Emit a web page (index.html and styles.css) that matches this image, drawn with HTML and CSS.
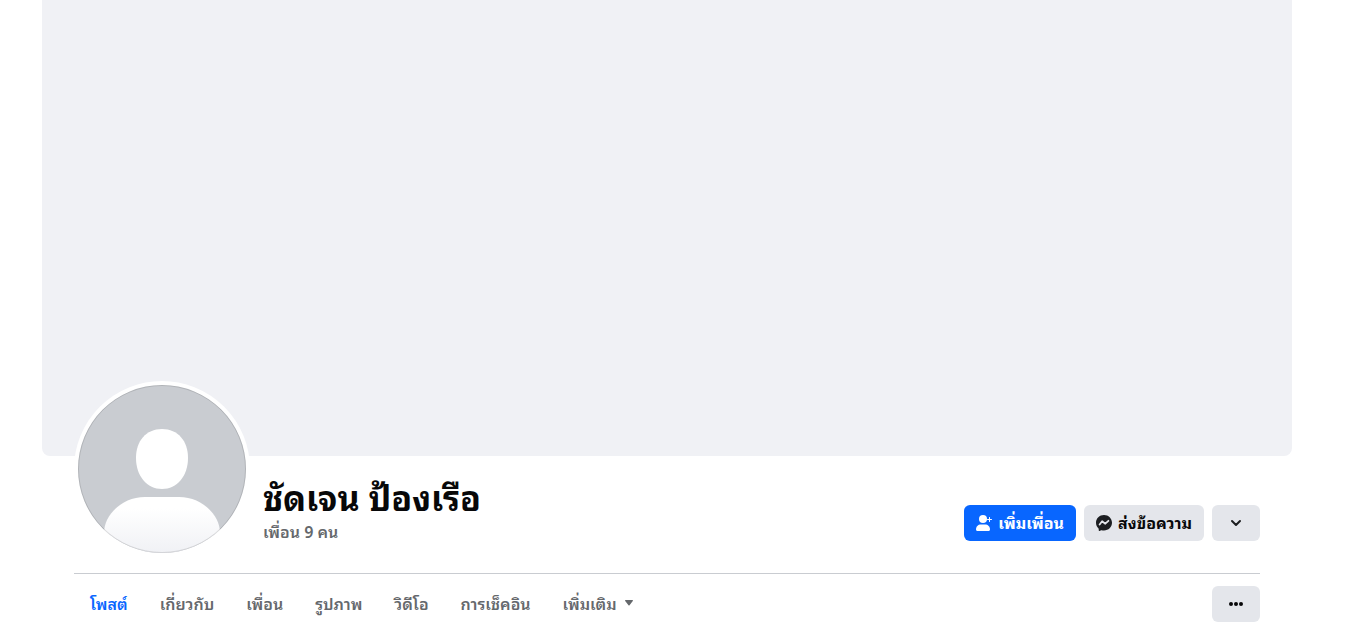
FILE: index.html
```
<!DOCTYPE html>
<html lang="th">
<head>
    <meta charset="UTF-8">
    <meta name="viewport" content="width=device-width, initial-scale=1.0">
    <title>ชัดเจน ป้องเรือ</title>
    <link rel="stylesheet" href="styles.css">
</head>
<body>

<main class="profile">
    <div class="cover"></div>

    <div class="profile-body">
        <header class="profile-header">
            <a href="#" class="avatar" aria-label="รูปโปรไฟล์">
                <svg viewBox="0 0 168 168" width="168" height="168">
                    <defs>
                        <clipPath id="circle"><circle cx="84" cy="84" r="84"/></clipPath>
                        <linearGradient id="shade" x1="0" y1="0" x2="0" y2="1">
                            <stop offset="0.2" stop-color="#fff"/>
                            <stop offset="1" stop-color="#f0f1f5"/>
                        </linearGradient>
                    </defs>
                    <g clip-path="url(#circle)">
                        <rect width="168" height="168" fill="#c9ccd1"/>
                        <path d="M84 44c16 0 26 12 26 29 0 18-11 31-26 31S58 91 58 73c0-17 10-29 26-29z" fill="#fff"/>
                        <path d="M26 168v-20c0-18 18-36 41-36h34c23 0 41 18 41 36v20z" fill="url(#shade)"/>
                    </g>
                    <circle cx="84" cy="84" r="83.5" fill="none" stroke="#000" stroke-opacity="0.12"/>
                </svg>
            </a>

            <div class="profile-info">
                <h1>ชัดเจน ป้องเรือ</h1>
                <a href="#" class="friend-count">เพื่อน 9 คน</a>
            </div>

            <div class="actions">
                <button type="button" class="btn btn-primary">
                    <svg viewBox="0 0 16 16" width="16" height="16" fill="currentColor">
                        <circle cx="7" cy="4" r="4"/>
                        <path d="M0 14.5C0 11.500 2 9.500 5 9.500h4c3 0 5 2 5 5 0 .9-.6 1.500-1.500 1.500h-11C.6 16 0 15.400 0 14.500z"/>
                        <path d="M13.500 2.500v4M11.500 4.500h4" stroke="currentColor" stroke-linecap="round"/>
                    </svg>
                    <span>เพิ่มเพื่อน</span>
                </button>
                <button type="button" class="btn">
                    <svg viewBox="0 0 16 16" width="16" height="16">
                        <path d="M8 0C3.500 0 0 3.300 0 7.700c0 2.300 1 4.300 2.500 5.700.2.200.2.400.2.600v1.300c0 .5.500.8.900.6l1.500-.7c.2-.1.300-.1.500 0 .8.200 1.600.3 2.400.3 4.500 0 8-3.300 8-7.700S12.500 0 8 0z" fill="#1c1e21"/>
                        <path d="M3.600 9.500 6.100 6.300 9.300 8.700 12.400 5.800" fill="none" stroke="#e4e6eb" stroke-width="1.800" stroke-linecap="round" stroke-linejoin="round"/>
                    </svg>
                    <span>ส่งข้อความ</span>
                </button>
                <button type="button" class="btn btn-icon" aria-label="ตัวเลือกเพิ่มเติม">
                    <svg viewBox="0 0 16 16" width="16" height="16">
                        <path d="M4 6l4 4 4-4" fill="none" stroke="#1c1e21" stroke-width="2" stroke-linecap="round" stroke-linejoin="round"/>
                    </svg>
                </button>
            </div>
        </header>

        <div class="tab-bar">
            <nav class="tabs">
                <a href="#" class="active">โพสต์</a>
                <a href="#">เกี่ยวกับ</a>
                <a href="#">เพื่อน</a>
                <a href="#">รูปภาพ</a>
                <a href="#">วิดีโอ</a>
                <a href="#">การเช็คอิน</a>
                <a href="#" class="more">เพิ่มเติม
                    <svg viewBox="0 0 8 6" width="8" height="6" fill="currentColor">
                        <path d="M.6 0h6.800c.5 0 .8.600.4 1L4.500 5.300c-.3.300-.7.300-1 0L.2 1C-.2.600.1 0 .6 0z"/>
                    </svg>
                </a>
            </nav>
            <button type="button" class="btn btn-icon" aria-label="ดูเพิ่มเติม">
                <svg viewBox="0 0 16 16" width="16" height="16" fill="#080809">
                    <circle cx="3" cy="8" r="2"/>
                    <circle cx="8" cy="8" r="2"/>
                    <circle cx="13" cy="8" r="2"/>
                </svg>
            </button>
        </div>
    </div>
</main>

</body>
</html>
```
FILE: styles.css
```
* {
    box-sizing: border-box;
}
body {
    margin: 0;
    padding-right: 18px;
    background: white;
    color: #080809;
    font-family: "Noto Sans Thai Looped", "Noto Sans", sans-serif;
    font-size: 16px;
}
a {
    color: inherit;
    text-decoration: none;
}
svg {
    display: block;
    flex-shrink: 0;
}
.profile {
    max-width: 1250px;
    margin: 0 auto;
}
.cover {
    height: 456px;
    background: #f0f1f5;
    border-radius: 0 0 8px 8px;
}
.profile-body {
    padding: 0 32px;
}
.profile-header {
    display: flex;
    align-items: flex-end;
    padding-bottom: 16px;
    border-bottom: 1px solid #c9ccd1;
}
.avatar {
    margin-top: -75px;
    border: 4px solid white;
    border-radius: 50%;
    background: white;
}
.profile-info {
    flex: 1;
    padding: 0 13px 16px;
}
h1 {
    margin: 0;
    font-size: 34px;
    line-height: 50px;
}
.friend-count {
    display: block;
    color: #65686c;
    font-weight: 600;
    line-height: 20px;
}
.actions {
    display: flex;
    gap: 8px;
    padding-bottom: 16px;
}
.btn {
    display: flex;
    align-items: center;
    justify-content: center;
    gap: 6px;
    height: 36px;
    padding: 0 12px;
    border: none;
    border-radius: 6px;
    background: #e4e6eb;
    color: #080809;
    font: inherit;
    font-weight: 700;
    line-height: 34px;
    white-space: nowrap;
    cursor: pointer;
}
.btn span {
    padding-bottom: 2px;
}
.btn-primary {
    background: #0866ff;
    color: white;
}
.btn-icon {
    width: 48px;
}
.tab-bar {
    display: flex;
    justify-content: space-between;
    padding-top: 12px;
}
.tabs {
    display: flex;
    align-items: flex-start;
    color: #65686c;
    font-weight: 600;
}
.tabs a {
    padding: 0 16px;
    line-height: 34px;
}
.tabs .active {
    color: #0866ff;
}
.tabs .more {
    display: flex;
    align-items: center;
    gap: 8px;
}
```
